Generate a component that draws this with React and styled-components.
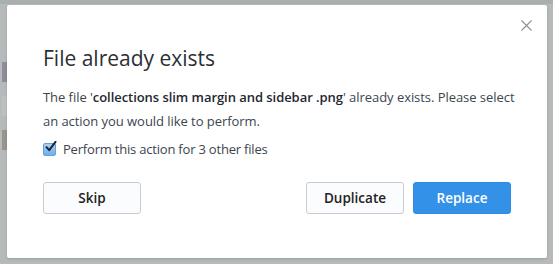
import styled, { createGlobalStyle } from 'styled-components'

const GlobalStyle = createGlobalStyle`
  html, body {
    margin: 0;
    padding: 0;
  }
  body {
    width: 553px;
    height: 264px;
    overflow: hidden;
    background: #b6babb;
    font-family: "Open Sans", "Noto Sans", sans-serif;
  }
`

const App = () => {
  return (
    <>
      <GlobalStyle />
      <Backdrop>
        <BackgroundApp>
          <Thumbs>
            <Thumb tone='#5a4a68' />
            <Thumb tone='#c9cdce' />
            <Thumb tone='#6e5e4c' />
          </Thumbs>
        </BackgroundApp>
        <Modal>
          <CloseButton aria-label='close'>
            <svg width='11' height='11' viewBox='0 0 11 11'>
              <path
                d='M0.5 0.5 L10.5 10.5 M10.5 0.5 L0.5 10.5'
                stroke='#8a9094'
                strokeWidth='1.1'
                fill='none'
              />
            </svg>
          </CloseButton>
          <Title>File already exists</Title>
          <Message>
            The file '<strong>collections slim margin and sidebar .png</strong>'
            already exists. Please select an action you would like to perform.
          </Message>
          <CheckRow>
            <CheckBox>
              <svg width='13' height='12' viewBox='0 0 13 12'>
                <path
                  d='M2.5 6.2 L5.2 9.2 L11.5 0.8'
                  stroke='#1b2530'
                  strokeWidth='2'
                  fill='none'
                  strokeLinecap='round'
                  strokeLinejoin='round'
                />
              </svg>
            </CheckBox>
            Perform this action for 3 other files
          </CheckRow>
          <Actions>
            <Button>Skip</Button>
            <Spacer />
            <Button>Duplicate</Button>
            <Button primary>Replace</Button>
          </Actions>
        </Modal>
      </Backdrop>
    </>
  )
}

export default App

const Backdrop = styled.div`
  position: relative;
  width: 553px;
  height: 264px;
  padding: 5px 6px 6px 7px;
  box-sizing: border-box;
  border-top: 4px solid #a9aeaf;
`

const BackgroundApp = styled.div`
  position: absolute;
  inset: 0;
  pointer-events: none;
`

const Thumbs = styled.div`
  position: absolute;
  left: 2px;
  top: 58px;
  display: flex;
  flex-direction: column;
  gap: 14px;
  opacity: 0.4;
`

const Thumb = styled.div`
  width: 5px;
  height: 20px;
  background: ${props => props.tone};
`

const Modal = styled.div`
  position: relative;
  width: 540px;
  height: 253px;
  margin-top: -4px;
  background: #fff;
  border-radius: 2px;
  box-shadow: 0 1px 3px rgba(0, 0, 0, 0.15);
  padding: 39px 36px 0 36px;
  box-sizing: border-box;
  display: flex;
  flex-direction: column;
`

const CloseButton = styled.div`
  position: absolute;
  top: 15px;
  right: 15px;
  width: 11px;
  height: 11px;
  display: grid;
  place-items: center;
  cursor: pointer;
`

const Title = styled.h1`
  margin: 0;
  font-size: 21px;
  font-weight: 400;
  color: #2b2f33;
  line-height: 28px;
`

const Message = styled.p`
  margin: 13px -9px 0 0;
  font-size: 13px;
  letter-spacing: -0.05px;
  line-height: 24px;
  color: #3b4550;

  strong {
    font-weight: 600;
    color: #1f2830;
  }
`

const CheckRow = styled.label`
  margin-top: 6px;
  display: flex;
  align-items: center;
  gap: 7px;
  font-size: 13px;
  letter-spacing: -0.2px;
  color: #3b4550;
  line-height: 20px;
`

const CheckBox = styled.span`
  width: 11px;
  height: 11px;
  border: 1px solid #6a9fd6;
  border-radius: 2px;
  background: linear-gradient(#a9d0f5, #6fb0ee);
  position: relative;
  flex-shrink: 0;

  svg {
    position: absolute;
    left: 0;
    top: -3px;
  }
`

const Actions = styled.div`
  display: flex;
  gap: 9px;
  margin-top: 23px;
`

const Spacer = styled.div`
  flex: 1;
`

const Button = styled.button`
  width: 98px;
  height: 32px;
  border-radius: 3px;
  font-family: "Open Sans", "Noto Sans", sans-serif;
  font-size: 13.5px;
  font-weight: 600;
  cursor: pointer;
  border: 1px solid ${props => (props.primary ? '#2f8ce4' : '#c8cdd3')};
  background: ${props => (props.primary ? '#3491e8' : '#fbfcfd')};
  color: ${props => (props.primary ? '#fff' : '#222')};
`
